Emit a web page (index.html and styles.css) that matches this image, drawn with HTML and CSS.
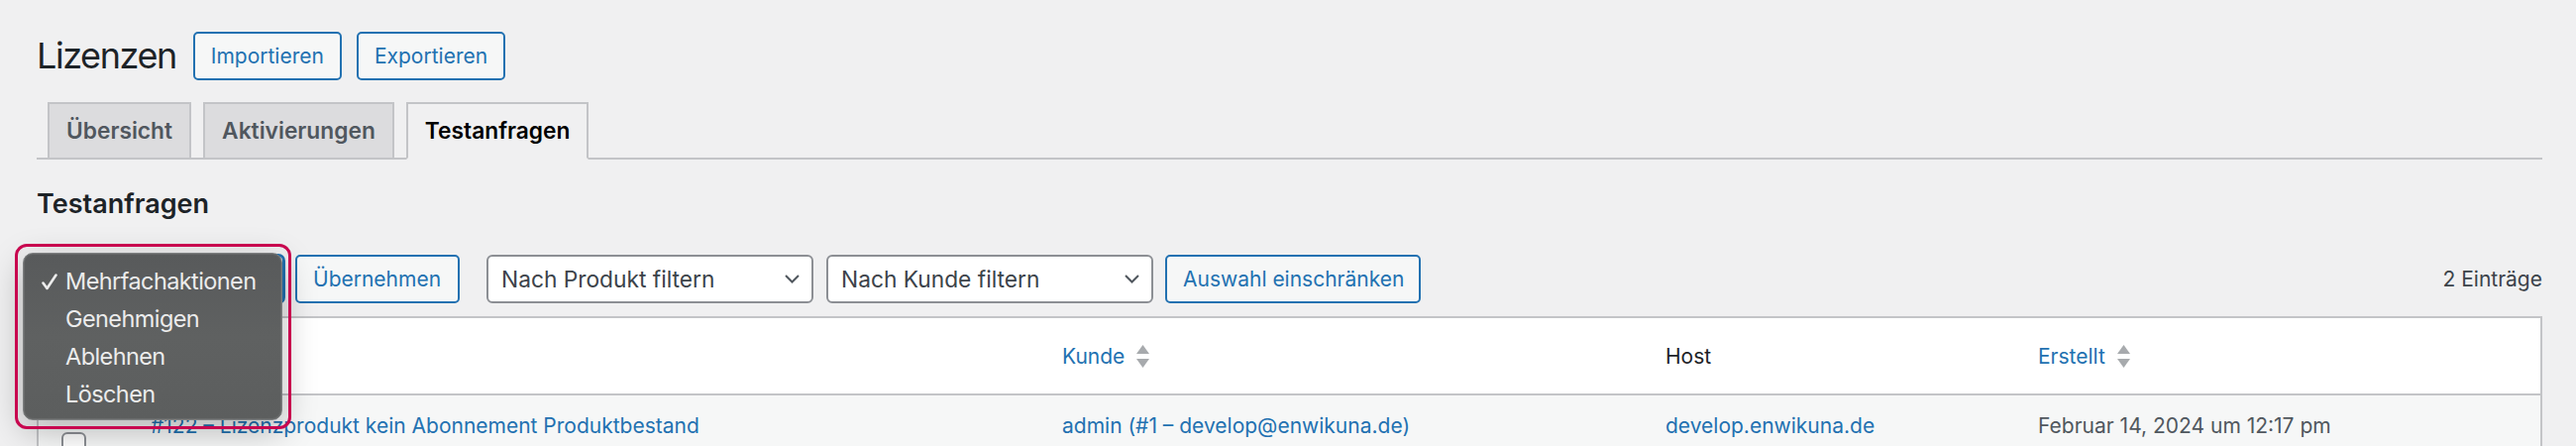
FILE: index.html
```html
<!DOCTYPE html>
<html lang="de">
<head>
<meta charset="utf-8">
<title>Lizenzen – Testanfragen</title>
<link rel="stylesheet" href="styles.css">
</head>
<body>
<div class="wrap">
  <div class="page-head">
    <h1 class="page-title">Lizenzen</h1>
    <a class="btn title-action">Importieren</a>
    <a class="btn title-action">Exportieren</a>
  </div>

  <nav class="tabs">
    <a class="tab">Übersicht</a>
    <a class="tab">Aktivierungen</a>
    <a class="tab active">Testanfragen</a>
  </nav>

  <h2 class="section-title">Testanfragen</h2>

  <div class="tablenav">
    <div class="bulk">
      <div class="select bulk-select focused">
        <span>Mehrfachaktionen</span>
        <svg class="chev" width="15" height="9" viewBox="0 0 15 9"><polyline points="1,1 7.5,7.5 14,1" fill="none" stroke="#50575e" stroke-width="2"/></svg>
      </div>
      <ul class="menu">
        <li><span class="check"><svg width="16" height="17" viewBox="0 0 16 17"><polyline points="1.5,9.5 5.5,15 14.5,1.5" fill="none" stroke="#ececec" stroke-width="2.6" stroke-linecap="round" stroke-linejoin="round"/></svg></span>Mehrfachaktionen</li>
        <li><span class="check"></span>Genehmigen</li>
        <li><span class="check"></span>Ablehnen</li>
        <li><span class="check"></span>Löschen</li>
      </ul>
      <div class="highlight"></div>
    </div>
    <button class="btn apply">Übernehmen</button>
    <div class="select filter">
      <span>Nach Produkt filtern</span>
      <svg class="chev" width="15" height="9" viewBox="0 0 15 9"><polyline points="1,1 7.5,7.5 14,1" fill="none" stroke="#50575e" stroke-width="2"/></svg>
    </div>
    <div class="select filter">
      <span>Nach Kunde filtern</span>
      <svg class="chev" width="15" height="9" viewBox="0 0 15 9"><polyline points="1,1 7.5,7.5 14,1" fill="none" stroke="#50575e" stroke-width="2"/></svg>
    </div>
    <button class="btn narrow">Auswahl einschränken</button>
    <div class="count">2 Einträge</div>
  </div>

  <table class="list">
    <colgroup>
      <col class="c-cb">
      <col class="c-title">
      <col class="c-kunde">
      <col class="c-host">
      <col class="c-date">
    </colgroup>
    <thead>
      <tr>
        <th class="cb"><span class="checkbox"></span></th>
        <th><a class="sort">Produkt<svg class="arrows" width="13" height="25" viewBox="0 0 13 25"><polygon points="0,10 6.5,1 13,10" fill="#a7aaad"/><polygon points="0,15 13,15 6.5,24" fill="#a7aaad"/></svg></a></th>
        <th><a class="sort">Kunde<svg class="arrows" width="13" height="25" viewBox="0 0 13 25"><polygon points="0,10 6.5,1 13,10" fill="#a7aaad"/><polygon points="0,15 13,15 6.5,24" fill="#a7aaad"/></svg></a></th>
        <th class="plain">Host</th>
        <th><a class="sort">Erstellt<svg class="arrows" width="13" height="25" viewBox="0 0 13 25"><polygon points="0,10 6.5,1 13,10" fill="#a7aaad"/><polygon points="0,15 13,15 6.5,24" fill="#a7aaad"/></svg></a></th>
      </tr>
    </thead>
    <tbody>
      <tr>
        <td class="cb"><span class="checkbox"></span></td>
        <td><a class="link">#122 – Lizenzprodukt kein Abonnement Produktbestand</a></td>
        <td><a class="link">admin (#1 – develop@enwikuna.de)</a></td>
        <td><a class="link">develop.enwikuna.de</a></td>
        <td>Februar 14, 2024 um 12:17 pm</td>
      </tr>
    </tbody>
  </table>
</div>
</body>
</html>
```

FILE: styles.css
```css
* { box-sizing: border-box; }

html, body { margin: 0; }

body {
  background: #f0f0f1;
  font-family: Inter, "Noto Sans", "Liberation Sans", sans-serif;
  font-size: 21px;
  color: #3c434a;
  overflow: hidden;
}

.wrap {
  padding: 32px 34px 0 37px;
}

/* Page head */
.page-head {
  display: flex;
  align-items: flex-start;
}

.page-title {
  margin: 0 17px 0 0;
  font-size: 36px;
  font-weight: 400;
  letter-spacing: -0.04em;
  line-height: 48px;
  color: #1d2327;
}

.btn {
  display: inline-flex;
  align-items: center;
  height: 49px;
  padding: 0 16px;
  border: 2px solid #2271b1;
  border-radius: 5px;
  background: #f6f7f7;
  color: #2271b1;
  font-family: inherit;
  font-size: 21px;
  line-height: 45px;
  white-space: nowrap;
  cursor: pointer;
}

.title-action + .title-action { margin-left: 15px; }

/* Tabs */
.tabs {
  display: flex;
  gap: 12px;
  margin-top: 22px;
  padding-left: 11px;
  border-bottom: 2px solid #c3c4c7;
}

.tab {
  height: 58px;
  margin-bottom: -2px;
  padding: 0 17px;
  border: 2px solid #c3c4c7;
  background: #dcdcde;
  color: #50575e;
  font-size: 22.75px;
  font-weight: 600;
  line-height: 54px;
}

.tab.active {
  background: #f0f0f1;
  color: #000;
  border-bottom-color: #f0f0f1;
}

/* Section title */
.section-title {
  margin: 27px 0 0;
  font-size: 27px;
  font-weight: 600;
  line-height: 36px;
  color: #1d2327;
}

/* Tablenav */
.tablenav {
  display: flex;
  align-items: center;
  height: 49px;
  margin-top: 33px;
}

.bulk {
  position: relative;
  width: 250px;
}

.select {
  display: flex;
  align-items: center;
  justify-content: space-between;
  height: 49px;
  padding: 0 12px 0 13px;
  border: 2px solid #8c8f94;
  border-radius: 6px;
  background: #fff;
  color: #3c434a;
  font-size: 22.75px;
  white-space: nowrap;
}

.bulk-select { width: 250px; }

.select.focused {
  border-color: #2271b1;
  box-shadow: 0 0 0 1px #2271b1;
}

.apply { width: 166px; margin-left: 11px; }

.filter { width: 330px; margin-left: 13px; }
.apply + .filter { margin-left: 27px; }

.narrow { width: 258px; margin-left: 12px; }

.count {
  margin-left: auto;
  line-height: 49px;
  color: #3c434a;
}

/* Native-looking dropdown menu (overlay) */
.menu {
  position: absolute;
  left: -14px;
  top: -2px;
  z-index: 10;
  width: 262px;
  height: 169px;
  margin: 0;
  padding: 9px 0 0 18px;
  list-style: none;
  border: 1px solid #7d7f80;
  border-radius: 10px;
  background: linear-gradient(180deg, #585a5b 0%, #5f6161 50%, #5c5e5e 100%);
  box-shadow: 0 10px 34px rgba(0, 0, 0, 0.28), inset 0 0 0 1px rgba(255, 255, 255, 0.08);
  color: #ececec;
  font-size: 23.5px;
  letter-spacing: -0.025em;
  line-height: 38px;
}

.menu li {
  display: flex;
  align-items: center;
}

.check {
  display: flex;
  align-items: center;
  width: 24px;
  height: 38px;
  flex: none;
}

.highlight {
  position: absolute;
  left: -22px;
  top: -11px;
  z-index: 11;
  width: 279px;
  height: 187px;
  border: 3px solid #c8064f;
  border-radius: 12px;
  pointer-events: none;
}

/* Table */
.list {
  width: 100%;
  margin-top: 13px;
  border: 2px solid #c3c4c7;
  border-collapse: separate;
  border-spacing: 0;
  table-layout: fixed;
  background: #fff;
}

.c-cb { width: 97px; }
.c-title { width: 920px; }
.c-kunde { width: 609px; }
.c-host { width: 376px; }
.c-date { width: 523px; }

.list th {
  height: 78px;
  padding: 0 16px;
  border-bottom: 2px solid #c3c4c7;
  text-align: left;
  font-weight: 400;
  vertical-align: middle;
  white-space: nowrap;
}

.list th.plain { color: #1d2327; }

.list th.cb .checkbox { display: none; }

.sort {
  display: inline-flex;
  align-items: center;
  color: #2271b1;
}

.arrows { margin-left: 12px; }

.list td {
  padding: 16px 16px 16px;
  background: #f6f7f7;
  color: #50575e;
  line-height: 30px;
  vertical-align: top;
  white-space: nowrap;
}

.list td.cb { padding: 37px 0 0 23px; }

.checkbox {
  display: block;
  width: 25px;
  height: 25px;
  border: 2px solid #8c8f94;
  border-radius: 6px;
  background: #fff;
}

.link { color: #2271b1; }
```
